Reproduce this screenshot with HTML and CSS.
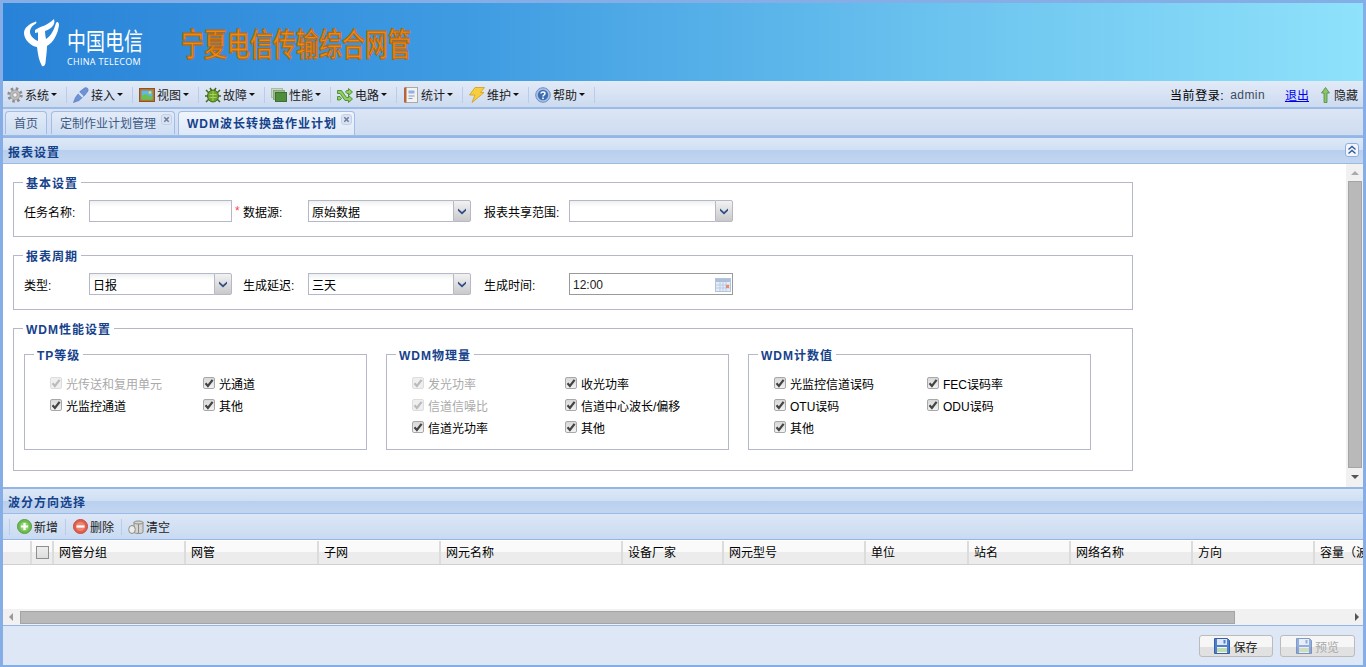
FILE: index.html
```html
<!DOCTYPE html>
<html lang="zh-CN">
<head>
  <meta charset="UTF-8">
  <title>宁夏电信传输综合网管</title>
  <link rel="stylesheet" href="styles.css">
</head>
<body>
  <svg class="defs" width="0" height="0">
    <symbol id="i-check" viewBox="0 0 12 12"><path d="M2.5 6.2l2.4 2.8L9.6 2.8" fill="none" stroke="currentColor" stroke-width="2.2"/></symbol>
    <symbol id="i-arrow" viewBox="0 0 12 12"><path d="M2 3.5l4 3.5 4-3.5v2.2L6 9.5 2 5.7z" fill="#2f4f8a"/></symbol>
    <symbol id="i-close" viewBox="0 0 11 11"><rect x=".5" y=".5" width="10" height="10" rx="2.5" fill="#d9e3f3" stroke="#c2d0e6"/><path d="M3.3 3.3l4.4 4.4M7.7 3.3L3.3 7.7" stroke="#6f7f9c" stroke-width="1.6"/></symbol>
    <symbol id="i-save" viewBox="0 0 16 16"><path d="M.5.5h13l2 2v13H.5z" fill="#4f7fd0" stroke="#3560a8"/><rect x="3" y="1" width="10" height="6" fill="#dfe8f8"/><rect x="9.5" y="2" width="2" height="3.5" fill="#4f7fd0"/><rect x="3" y="9" width="10" height="6" fill="#f4f6f0"/><path d="M3 11h10M3 13h10" stroke="#8dc06a" stroke-width="1.2"/></symbol>
  </svg>

  <div class="app">
    <header class="banner">
      <div class="logo">
        <svg class="logo-mark" width="37" height="51" viewBox="0 0 37 51">
          <path fill="#fff" d="M12 5C6 7 1 11 1 16c0 7 7 13 13 14 1 8 2 14 5 19 2 1 3-1 3.500-3 .5-6 1.500-12 1.500-17 6-3 11-12 12-21 0-3-2-4-3-2-2 7-5 13-10 16-1-4-1-8-1-12l-7 3v11c-5-2-8-6-8-9 0-4 3-7 6-8.500 1-1.500 0-2.500-1-1.500z"/>
          <path fill="#fff" d="M12 13c6-4 12-4 19-11 1 3 0 6-2 8-4 4-11 5-17 6z"/>
        </svg>
        <div class="logo-text">
          <div class="logo-cn">中国电信</div>
          <div class="logo-en">CHINA TELECOM</div>
        </div>
      </div>
      <div class="app-title">宁夏电信传输综合网管</div>
    </header>

    <nav class="menubar">
      <div class="menu-item">
        <svg width="16" height="16" viewBox="0 0 16 16"><circle cx="8" cy="8" r="6.2" fill="none" stroke="#8c8c8c" stroke-width="3" stroke-dasharray="2.4 2.47"/><circle cx="8" cy="8" r="5" fill="#bdbdbd" stroke="#8e8e8e" stroke-width=".6"/><circle cx="8" cy="8" r="2.2" fill="#f4f4f4" stroke="#888" stroke-width=".7"/></svg>
        <span>系统</span><i class="caret"></i>
      </div>
      <div class="menu-item">
        <svg width="16" height="16" viewBox="0 0 16 16"><path d="M.5 15.500l2-5L7 4.500 11.500 1c2.500-1 4 .5 3.500 3l-3.500 4.500-5.500 5z" fill="#6f92d6" stroke="#4c6fb4" stroke-width=".6"/><path d="M5.500 5.500l4.500 4.500" stroke="#d7e3f7" stroke-width="2"/></svg>
        <span>接入</span><i class="caret"></i>
      </div>
      <div class="menu-item">
        <svg width="16" height="16" viewBox="0 0 16 16"><rect x=".5" y="1.5" width="15" height="13" fill="#b5762e" stroke="#8a5520"/><rect x="2.5" y="3.5" width="11" height="9" fill="#5fb8e8"/><path d="M2.5 12.5V9l4-2 7 3v2.500z" fill="#6cc04c"/><circle cx="11" cy="5.500" r="1.300" fill="#f4e04c"/></svg>
        <span>视图</span><i class="caret"></i>
      </div>
      <div class="menu-item">
        <svg width="16" height="16" viewBox="0 0 16 16"><path d="M1 3l3 3M15 3l-3 3M0 9h3M16 9h-3M1 15l3-3M15 15l-3-3M5 1l2 3M11 1L9 4" stroke="#3f6a1e" stroke-width="1.500"/><ellipse cx="8" cy="9" rx="5.500" ry="6" fill="#6ea32c" stroke="#3f6a1e"/><path d="M4.500 7.500h7M4.500 10.500h7M8 4v10" stroke="#a9cf5c"/></svg>
        <span>故障</span><i class="caret"></i>
      </div>
      <div class="menu-item">
        <svg width="16" height="16" viewBox="0 0 16 16"><rect x=".5" y="1.500" width="11" height="9" fill="#c8d8c4" stroke="#a8bca6"/><rect x="2.500" y="3.500" width="11" height="9" fill="#9dbb90" stroke="#86a67c"/><rect x="4.500" y="5.500" width="11" height="9" fill="#4f8c3c" stroke="#3c7030"/></svg>
        <span>性能</span><i class="caret"></i>
      </div>
      <div class="menu-item">
        <svg width="16" height="16" viewBox="0 0 16 16"><path d="M.5 3.500h4l5 7h2V8.500l4 3.500-4 3.500v-2h-3.500l-5-7h-2.500z" fill="#8fd05c" stroke="#3f7d24" stroke-width=".8"/><path d="M.5 9.500h2.500l1.500 2-1.500 1.500h-2.500zM8.500 5l1-1.500h2v-2l4 3.500-4 3.500v-2h-1.500z" fill="#8fd05c" stroke="#3f7d24" stroke-width=".8"/></svg>
        <span>电路</span><i class="caret"></i>
      </div>
      <div class="menu-item">
        <svg width="16" height="16" viewBox="0 0 16 16"><rect x="2.500" y=".5" width="12" height="15" fill="#f2f2ee" stroke="#a9a9a9"/><rect x="1" y=".5" width="2.500" height="15" fill="#b5653a"/><path d="M5.500 3.500h6v3h-6z" fill="#8fb0e8"/><path d="M5.500 9h6M5.500 11.500h4" stroke="#7c9bd4"/></svg>
        <span>统计</span><i class="caret"></i>
      </div>
      <div class="menu-item">
        <svg width="16" height="16" viewBox="0 0 16 16"><path d="M6 .5h9.500l-4 5h3.500L3 15.500l3-7.500H.5z" fill="#f6cf3e" stroke="#d79a1c" stroke-width=".8"/></svg>
        <span>维护</span><i class="caret"></i>
      </div>
      <div class="menu-item">
        <svg width="16" height="16" viewBox="0 0 16 16"><circle cx="8" cy="8" r="7.300" fill="#a9c2e6" stroke="#6d8fc4"/><circle cx="8" cy="8" r="5.200" fill="#3f6eb0"/><path d="M6 6.500C6 4.600 10 4.600 10 6.600 10 8 8 8 8 9.500" fill="none" stroke="#fff" stroke-width="1.500"/><rect x="7.200" y="10.500" width="1.600" height="1.600" fill="#fff"/></svg>
        <span>帮助</span><i class="caret"></i>
      </div>
      <div class="user-box">
        <span class="user-label">当前登录:</span>
        <span class="user-name">admin</span>
        <a class="logout" href="#">退出</a>
        <svg width="9" height="16" viewBox="0 0 9 16"><path d="M4.500.5L8.500 6H6v9.500H3V6H.5z" fill="#8cc46c" stroke="#4f8a3c" stroke-width=".8"/></svg>
        <span class="hide-link">隐藏</span>
      </div>
    </nav>

    <div class="tabbar">
      <div class="tab tab-home">首页</div>
      <div class="tab tab-plan">定制作业计划管理<svg class="tab-close" width="11" height="11"><use href="#i-close"/></svg></div>
      <div class="tab tab-active">WDM波长转换盘作业计划<svg class="tab-close" width="11" height="11"><use href="#i-close"/></svg></div>
    </div>

    <section class="panel-top">
      <div class="panel-head">
        <span>报表设置</span>
        <div class="collapse-btn">
          <svg width="14" height="14" viewBox="0 0 14 14"><rect x=".5" y=".5" width="13" height="13" rx="2.500" fill="#f2f6fc" stroke="#8fb0dc"/><path d="M3.500 6.500L7 3.500l3.500 3M3.500 10.500L7 7.500l3.500 3" fill="none" stroke="#2f5a9c" stroke-width="1.400"/></svg>
        </div>
      </div>
      <div class="panel-body">
        <form class="report-form">
          <fieldset class="group">
            <legend>基本设置</legend>
            <div class="form-row">
              <label>任务名称:</label>
              <input class="text-input" type="text">
              <span class="required">*</span>
              <label>数据源:</label>
              <div class="combo"><input class="text-input" type="text" value="原始数据"><span class="combo-btn"><svg width="12" height="12"><use href="#i-arrow"/></svg></span></div>
              <span></span>
              <label>报表共享范围:</label>
              <div class="combo"><input class="text-input" type="text"><span class="combo-btn"><svg width="12" height="12"><use href="#i-arrow"/></svg></span></div>
            </div>
          </fieldset>

          <fieldset class="group">
            <legend>报表周期</legend>
            <div class="form-row">
              <label>类型:</label>
              <div class="combo"><input class="text-input" type="text" value="日报"><span class="combo-btn"><svg width="12" height="12"><use href="#i-arrow"/></svg></span></div>
              <span></span>
              <label>生成延迟:</label>
              <div class="combo"><input class="text-input" type="text" value="三天"><span class="combo-btn"><svg width="12" height="12"><use href="#i-arrow"/></svg></span></div>
              <span></span>
              <label>生成时间:</label>
              <div class="date-field">
                <span>12:00</span>
                <svg width="16" height="14" viewBox="0 0 16 14"><rect x=".5" y=".5" width="15" height="13" fill="#e4ecf8" stroke="#b4c4dc"/><rect x="1" y="1" width="14" height="3" fill="#aebfda"/><path d="M1 7h14M1 10h14M5 4v9M8 4v9M11 4v9" stroke="#bccbe2"/><rect x="11" y="7" width="3" height="3" fill="#e88a6c"/></svg>
              </div>
            </div>
          </fieldset>

          <fieldset class="group group-wdm">
            <legend>WDM性能设置</legend>
            <div class="sub-groups">
              <fieldset class="sub-group">
                <legend>TP等级</legend>
                <div class="check-grid">
                  <div class="check disabled"><span class="chk"><svg width="12" height="12"><use href="#i-check"/></svg></span>光传送和复用单元</div>
                  <div class="check"><span class="chk"><svg width="12" height="12"><use href="#i-check"/></svg></span>光通道</div>
                  <div class="check"><span class="chk"><svg width="12" height="12"><use href="#i-check"/></svg></span>光监控通道</div>
                  <div class="check"><span class="chk"><svg width="12" height="12"><use href="#i-check"/></svg></span>其他</div>
                </div>
              </fieldset>
              <fieldset class="sub-group">
                <legend>WDM物理量</legend>
                <div class="check-grid">
                  <div class="check disabled"><span class="chk"><svg width="12" height="12"><use href="#i-check"/></svg></span>发光功率</div>
                  <div class="check"><span class="chk"><svg width="12" height="12"><use href="#i-check"/></svg></span>收光功率</div>
                  <div class="check disabled"><span class="chk"><svg width="12" height="12"><use href="#i-check"/></svg></span>信道信噪比</div>
                  <div class="check"><span class="chk"><svg width="12" height="12"><use href="#i-check"/></svg></span>信道中心波长/偏移</div>
                  <div class="check"><span class="chk"><svg width="12" height="12"><use href="#i-check"/></svg></span>信道光功率</div>
                  <div class="check"><span class="chk"><svg width="12" height="12"><use href="#i-check"/></svg></span>其他</div>
                </div>
              </fieldset>
              <fieldset class="sub-group">
                <legend>WDM计数值</legend>
                <div class="check-grid">
                  <div class="check"><span class="chk"><svg width="12" height="12"><use href="#i-check"/></svg></span>光监控信道误码</div>
                  <div class="check"><span class="chk"><svg width="12" height="12"><use href="#i-check"/></svg></span>FEC误码率</div>
                  <div class="check"><span class="chk"><svg width="12" height="12"><use href="#i-check"/></svg></span>OTU误码</div>
                  <div class="check"><span class="chk"><svg width="12" height="12"><use href="#i-check"/></svg></span>ODU误码</div>
                  <div class="check"><span class="chk"><svg width="12" height="12"><use href="#i-check"/></svg></span>其他</div>
                </div>
              </fieldset>
            </div>
          </fieldset>
        </form>
        <div class="vscroll">
          <i class="sb-up"></i>
          <div class="vscroll-thumb"></div>
          <i class="sb-down"></i>
        </div>
      </div>
    </section>

    <section class="panel-bottom">
      <div class="panel-head">
        <span>波分方向选择</span>
      </div>
      <div class="toolbar">
        <div class="tool">
          <svg width="15" height="15" viewBox="0 0 15 15"><circle cx="7.500" cy="7.500" r="7" fill="#6dbb4e" stroke="#5a9c42"/><circle cx="7.500" cy="7.500" r="4.500" fill="#8fd070"/><path d="M7.500 4v7M4 7.500h7" stroke="#fff" stroke-width="2.200"/></svg>
          新增
        </div>
        <div class="tool">
          <svg width="15" height="15" viewBox="0 0 15 15"><circle cx="7.500" cy="7.500" r="7" fill="#e0604c" stroke="#c24c3c"/><circle cx="7.500" cy="7.500" r="4.500" fill="#ee8474"/><path d="M3.500 7.500h8" stroke="#fff" stroke-width="2.200"/></svg>
          删除
        </div>
        <div class="tool">
          <svg width="16" height="16" viewBox="0 0 16 16"><path d="M6 3.500C6 1.500 15 1.500 15 3.500V13c0 2-9 2-9 0z" fill="#d4d4d0" stroke="#8a8a88"/><path d="M6 3.500c0 2 9 2 9 0M10.500 5v9" fill="none" stroke="#8a8a88"/><ellipse cx="4" cy="10.500" rx="3.300" ry="4" fill="#ecece8" stroke="#8a8a88"/></svg>
          清空
        </div>
      </div>
      <div class="grid-head">
        <div class="grid-col"></div>
        <div class="grid-col grid-col-check"><span class="head-chk"></span></div>
        <div class="grid-col">网管分组</div>
        <div class="grid-col">网管</div>
        <div class="grid-col">子网</div>
        <div class="grid-col">网元名称</div>
        <div class="grid-col">设备厂家</div>
        <div class="grid-col">网元型号</div>
        <div class="grid-col">单位</div>
        <div class="grid-col">站名</div>
        <div class="grid-col">网络名称</div>
        <div class="grid-col">方向</div>
        <div class="grid-col">容量（波长）</div>
      </div>
      <div class="grid-body"></div>
      <div class="hscroll">
        <i class="sb-left"></i>
        <div class="hscroll-thumb"></div>
        <i class="sb-right"></i>
      </div>
    </section>

    <footer class="footer">
      <button class="btn" type="button"><svg width="16" height="16"><use href="#i-save"/></svg>保存</button>
      <button class="btn btn-disabled" type="button"><svg width="16" height="16"><use href="#i-save"/></svg>预览</button>
    </footer>
  </div>
</body>
</html>
```

FILE: styles.css
```css
* {
  box-sizing: border-box;
}
html, body {
  margin: 0;
  height: 100%;
  overflow: hidden;
}
body {
  font-family: "Liberation Sans", "Noto Sans CJK SC", sans-serif;
  font-size: 12px;
  color: #000;
  background-color: #fff;
}
.defs {
  position: absolute;
}
.app {
  display: flex;
  flex-direction: column;
  height: 667px;
  border: solid #85aee6;
  border-width: 3px 3px 2px;
  background-color: #dde7f6;
}

/* banner */
.banner {
  display: flex;
  align-items: center;
  flex: none;
  height: 78px;
  padding-left: 20px;
  background: linear-gradient(to right, #2883d8, #3e9ae1 33%, #6cc4ef 70%, #8fe2fb);
}
.logo {
  display: flex;
  width: 158px;
}
.logo-mark {
  margin-top: 1px;
}
.logo-text {
  margin-left: 7px;
  color: #fff;
}
.logo-cn {
  width: 76px;
  margin-top: 13px;
  font-size: 19px;
  line-height: 26px;
  white-space: nowrap;
  transform: scaleY(1.25);
}
.logo-en {
  margin-top: 1px;
  font-family: "Open Sans", sans-serif;
  font-size: 9px;
  line-height: 12px;
  letter-spacing: .3px;
  white-space: nowrap;
}
.app-title {
  margin-top: 6px;
  font-size: 23px;
  font-weight: 500;
  line-height: 32px;
  color: #ee8a10;
  -webkit-text-stroke: .8px #b9650c;
  white-space: nowrap;
  transform: scaleY(1.4);
}

/* menu */
.menubar {
  display: flex;
  align-items: center;
  flex: none;
  height: 28px;
  padding: 1px 5px 0 0;
  border-bottom: 2px solid #9cbce8;
  background: linear-gradient(#e2eaf7, #cddbf0);
}
.menu-item {
  display: flex;
  align-items: center;
  width: 66px;
  height: 16px;
  padding-left: 6px;
  border-right: 1px solid #b9cdea;
}
.menu-item:first-child {
  width: 64px;
  padding-left: 4px;
}
.menu-item span {
  margin-left: 2px;
  color: #1c1c1c;
}
.caret {
  width: 0;
  height: 0;
  margin-left: 2px;
  border: solid transparent;
  border-width: 3px 3px 0;
  border-top-color: #111;
}
.user-box {
  display: flex;
  align-items: center;
  margin-left: auto;
}
.user-label {
  letter-spacing: .6px;
}
.user-name {
  margin-left: 6px;
  color: #3c4a60;
  letter-spacing: .4px;
}
.logout {
  margin: 0 12px 0 20px;
  color: #0000ee;
}
.hide-link {
  margin-left: 4px;
  color: #222;
}

/* tabs */
.tabbar {
  display: flex;
  flex: none;
  height: 27px;
  padding: 2px 0 0 2px;
  border-bottom: 1px solid #9cbce8;
  background: linear-gradient(#dbe5f5, #cfdcf0);
}
.tab {
  display: flex;
  align-items: center;
  position: relative;
  height: 23px;
  margin-right: 4px;
  padding-bottom: 2px;
  border: 1px solid #9fbde6;
  border-bottom: 0;
  border-radius: 4px 4px 0 0;
  background: linear-gradient(#e3ebf8, #cfdef3);
  color: #3c5a82;
}
.tab-home {
  width: 42px;
  padding-left: 8px;
}
.tab-plan {
  width: 124px;
  padding-left: 8px;
}
.tab-active {
  width: 177px;
  height: 24px;
  margin-left: -1px;
  padding-left: 8px;
  background: linear-gradient(#f0f5fc, #dde8f7);
  color: #15428b;
  font-weight: bold;
  letter-spacing: 1px;
}
.tab-close {
  position: absolute;
  top: 2px;
  right: 2px;
}

/* panels */
.panel-head {
  display: flex;
  align-items: center;
  justify-content: space-between;
  flex: none;
  height: 27px;
  padding: 1px 4px 0 5px;
  border-top: 2px solid #93b6e6;
  border-bottom: 1px solid #99bbe8;
  background: linear-gradient(#dde8f6 0, #cfe0f4 48%, #b8cfee 50%, #c3d6f0 100%);
  color: #15428b;
  font-weight: bold;
  letter-spacing: 1px;
}
.panel-top {
  display: flex;
  flex-direction: column;
  flex: none;
  height: 351px;
}
.panel-top .panel-head {
  height: 28px;
}
.panel-body {
  display: flex;
  flex: 1;
  min-height: 0;
  background-color: #fff;
}
.report-form {
  flex: 1;
  padding: 8px 0 0 10px;
}
.group {
  width: 1120px;
  height: 65px;
  margin: 0 0 8px;
  padding: 0 0 0 10px;
  border: 1px solid #b5b8c8;
  min-width: 0;
}
.group legend,
.sub-group legend {
  margin-left: -1px;
  padding: 4px 3px 0;
  color: #15428b;
  font-weight: bold;
  letter-spacing: 1px;
  line-height: 16px;
}
.group-wdm {
  height: 153px;
}
.form-row {
  display: grid;
  grid-template-columns: 65px 143px 11px 65px 163px 13px 85px 164px;
  align-items: center;
  height: 22px;
  margin-top: 8px;
}
.required {
  padding-left: 3px;
  color: #f44;
}
.text-input {
  width: 100%;
  height: 22px;
  padding: 1px 3px;
  border: 1px solid #b5b8c8;
  outline: 0;
  background: linear-gradient(#eef0f0, #fff 6px);
  font: inherit;
  color: #000;
}
.combo {
  display: flex;
}
.combo .text-input {
  flex: 1;
  min-width: 0;
  border-right: 0;
}
.combo-btn {
  display: flex;
  align-items: center;
  justify-content: center;
  flex: none;
  width: 18px;
  height: 22px;
  border: 1px solid #b5b8c8;
  border-radius: 0 2px 2px 0;
  background: linear-gradient(#f2f2f2, #c9c9c9);
}
.date-field {
  display: flex;
  align-items: center;
  justify-content: space-between;
  height: 22px;
  padding: 1px 1px 0 3px;
  border: 1px solid #9a9a9a;
  color: #222;
}

/* wdm sub groups */
.sub-groups {
  display: flex;
  gap: 19px;
  margin-top: 6px;
}
.sub-group {
  width: 343px;
  height: 106px;
  margin: 0;
  padding: 0 0 0 25px;
  border: 1px solid #b5b8c8;
  min-width: 0;
}
.sub-group legend {
  margin-left: -16px;
}
.check-grid {
  display: grid;
  grid-template-columns: 153px 153px;
  grid-auto-rows: 22px;
  margin-top: 8px;
}
.check {
  display: flex;
  align-items: center;
  white-space: nowrap;
}
.chk {
  display: flex;
  flex: none;
  width: 12px;
  height: 12px;
  margin-right: 4px;
  border: 1px solid #a8a8a8;
  border-radius: 2px;
  background: linear-gradient(#d8d8d8, #f2f2f2);
  color: #444;
}
.chk svg {
  margin: -1px;
}
.check.disabled {
  color: #aaa;
}
.check.disabled .chk {
  border-color: #ddd;
  background: #efefef;
  color: #bbb;
}

/* scrollbars */
.vscroll {
  display: flex;
  flex-direction: column;
  align-items: center;
  flex: none;
  width: 17px;
  background-color: #f1f1f1;
}
.vscroll-thumb {
  flex: none;
  width: 14px;
  height: 287px;
  border: 1px solid #a4a4a4;
  background-color: #b9b9b9;
}
.sb-up, .sb-down, .sb-left, .sb-right {
  flex: none;
  width: 0;
  height: 0;
  border: solid transparent;
}
.sb-up {
  margin: 7px 0 6px;
  border-width: 0 4px 4px;
  border-bottom-color: #aaa;
}
.sb-down {
  margin-top: 7px;
  border-width: 4px 4px 0;
  border-top-color: #555;
}
.sb-left {
  margin: 0 5px 0 6px;
  border-width: 4px 4px 4px 0;
  border-right-color: #999;
}
.sb-right {
  margin: 0 4px 0 auto;
  border-width: 4px 0 4px 4px;
  border-left-color: #555;
}
.hscroll {
  display: flex;
  align-items: center;
  flex: none;
  height: 17px;
  border-bottom: 1px solid #93b6e6;
  background-color: #f1f1f1;
}
.hscroll-thumb {
  width: 1215px;
  height: 13px;
  margin-left: 2px;
  border: 1px solid #a4a4a4;
  background-color: #b9b9b9;
}

/* bottom panel */
.panel-bottom {
  display: flex;
  flex-direction: column;
  flex: none;
  height: 139px;
  background-color: #fff;
}
.toolbar {
  display: flex;
  align-items: center;
  flex: none;
  height: 26px;
  padding-left: 6px;
  border-bottom: 1px solid #93b6e6;
  background: linear-gradient(#dde7f6, #c9daf1);
}
.tool {
  display: flex;
  align-items: center;
  gap: 2px;
  width: 56px;
  height: 16px;
  padding-left: 7px;
  border-left: 1px solid #b9cdea;
  color: #1c1c1c;
}
.tool:last-child {
  padding-left: 6px;
}
.grid-head {
  display: grid;
  grid-template-columns: 29px 22px 132px 133px 122px 182px 101px 142px 103px 102px 122px 122px 122px;
  flex: none;
  height: 25px;
  overflow: hidden;
  border-top: 1px solid #fff;
  border-bottom: 1px solid #d0d0d0;
  background: linear-gradient(#fafafa 50%, #ececec 50%);
  white-space: nowrap;
}
.grid-col {
  padding-left: 5px;
  border-right: 2px solid #dcdcdc;
  line-height: 25px;
}
.grid-col-check {
  padding: 5px 0 0 4px;
}
.head-chk {
  display: block;
  width: 13px;
  height: 13px;
  border: 1px solid #8e8e8e;
  background: linear-gradient(#eee, #ddd);
}
.grid-body {
  flex: 1;
}

/* footer */
.footer {
  display: flex;
  justify-content: flex-end;
  flex: 1;
  gap: 7px;
  padding: 9px 8px 0 0;
}
.btn {
  display: flex;
  align-items: center;
  justify-content: center;
  gap: 3px;
  width: 74px;
  height: 22px;
  padding: 0;
  border: 1px solid #bbb;
  border-radius: 3px;
  background: linear-gradient(#f6f6f6 55%, #e1e1e1 55%);
  font: inherit;
  color: #222;
}
.btn-disabled {
  width: 75px;
  color: #aaa;
}
.btn-disabled svg {
  opacity: .6;
}
```
